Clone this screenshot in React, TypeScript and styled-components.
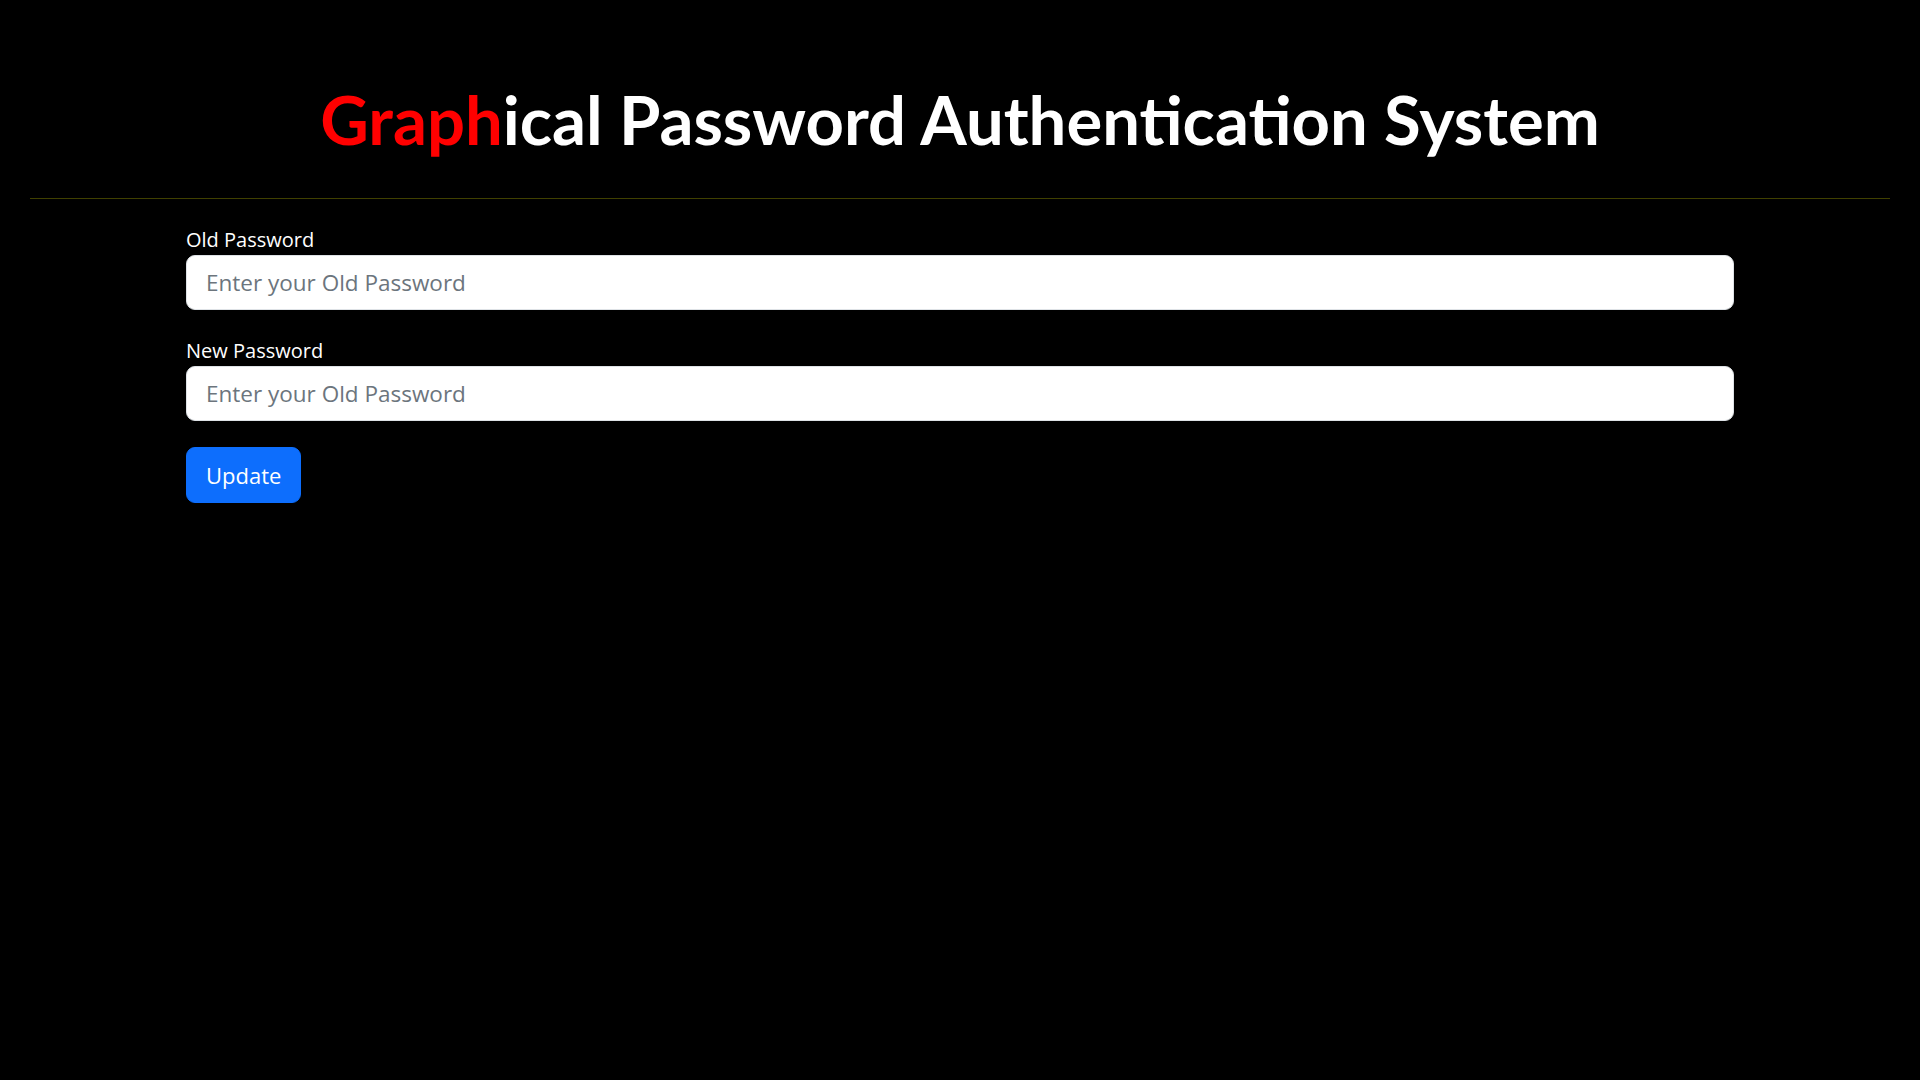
import React from "react";
import styled, { createGlobalStyle } from "styled-components";

const GlobalStyle = createGlobalStyle`
  html, body {
    margin: 0;
    padding: 0;
    background: #000;
  }
  body {
    font-family: "Open Sans", "Noto Sans", "Liberation Sans", sans-serif;
    color: #fff;
  }
  * { box-sizing: border-box; }
`;

const Page = styled.div`
  min-height: 1080px;
  background: #000;
  padding: 0 30px;
`;

const Header = styled.header`
  padding-top: 79px;
  padding-bottom: 39px;
  border-bottom: 1px solid rgb(64, 64, 0);
`;

const Title = styled.h1`
  margin: 0;
  text-align: center;
  font-family: Lato, "Open Sans", sans-serif;
  font-weight: 700;
  font-size: 67px;
  line-height: 1.2;
  color: #fff;
`;

const Accent = styled.span`
  color: #ff0000;
`;

const Form = styled.form`
  width: 1548px;
  margin: 0 auto;
  padding-top: 26px;
  display: flex;
  flex-direction: column;
  align-items: flex-start;
`;

const Field = styled.div`
  width: 100%;
  display: flex;
  flex-direction: column;
  margin-bottom: 26px;
`;

const Label = styled.label`
  font-size: 20px;
  line-height: 30px;
  color: #fff;
  margin-bottom: 0;
`;

const Input = styled.input`
  width: 100%;
  height: 55px;
  padding: 0 19px;
  font-family: "Open Sans", "Noto Sans", sans-serif;
  font-size: 22.5px;
  color: #212529;
  background: #fff;
  border: 1px solid #dee2e6;
  border-radius: 9px;
  outline: none;
  &::placeholder {
    color: #6c757d;
  }
`;

const Button = styled.button`
  height: 56px;
  padding: 0 19px;
  font-family: "Open Sans", "Noto Sans", sans-serif;
  font-size: 22px;
  color: #fff;
  background: #0d6efd;
  border: 1px solid #0d6efd;
  border-radius: 9px;
  cursor: pointer;
`;

export default function App() {
  return (
    <>
      <GlobalStyle />
      <Page>
        <Header>
          <Title>
            <Accent>Graph</Accent>ical Password Authentication System
          </Title>
        </Header>
        <Form onSubmit={(e) => e.preventDefault()}>
          <Field>
            <Label htmlFor="old">Old Password</Label>
            <Input id="old" type="password" placeholder="Enter your Old Password" />
          </Field>
          <Field>
            <Label htmlFor="new">New Password</Label>
            <Input id="new" type="password" placeholder="Enter your Old Password" />
          </Field>
          <Button type="submit">Update</Button>
        </Form>
      </Page>
    </>
  );
}
